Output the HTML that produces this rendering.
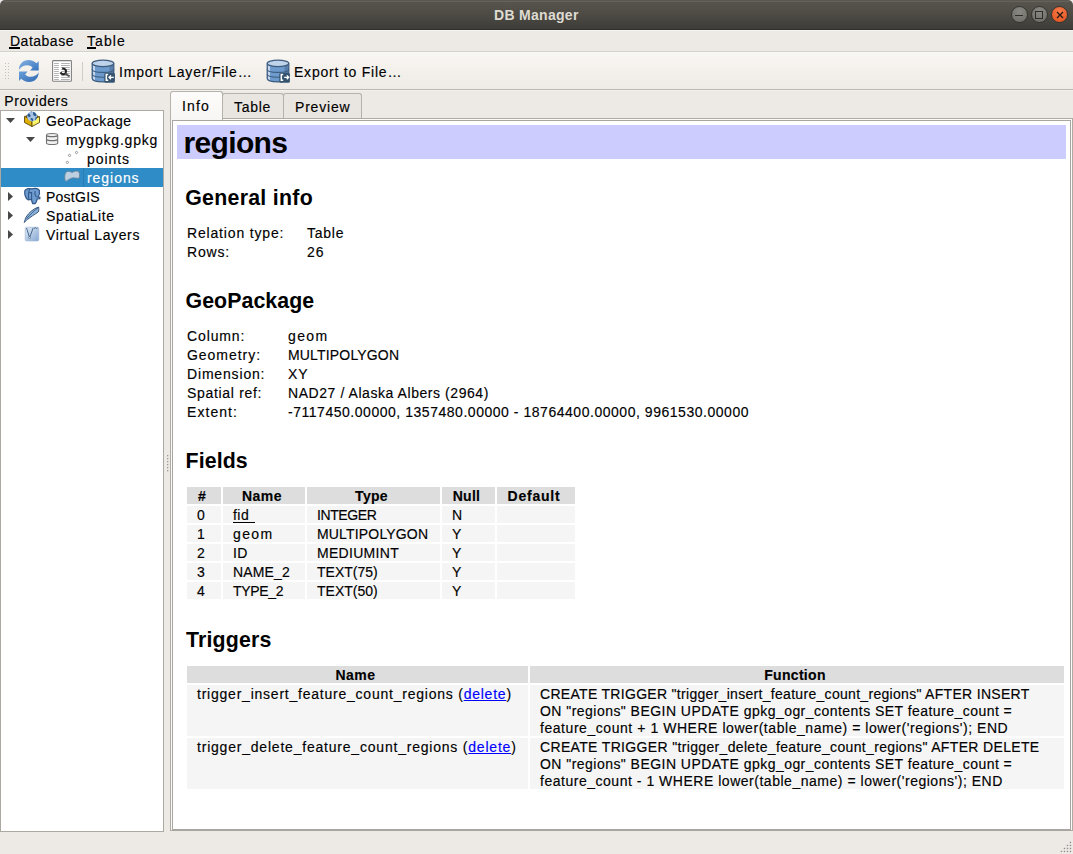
<!DOCTYPE html>
<html><head><meta charset="utf-8">
<style>
html,body{margin:0;padding:0}
body{width:1073px;height:854px;overflow:hidden;position:relative;background:#edeae6;font-family:"Liberation Sans",sans-serif;color:#000}
.a{position:absolute}
.t{position:absolute;font-size:14px;line-height:19px;letter-spacing:.45px;white-space:pre;color:#000;-webkit-text-stroke:.15px currentColor}
.h{position:absolute;font-size:21.33px;line-height:26px;font-weight:bold;white-space:pre;color:#000}
.cell{position:absolute;background:#f5f5f5}
.hc{position:absolute;background:#dddddd}
.b{font-weight:bold}
</style></head>
<body>
<!-- desktop corners -->
<div class="a" style="left:0;top:0;width:1073px;height:8px;background:#ebebeb"></div>
<!-- title bar -->
<div class="a" style="left:0;top:0;width:1073px;height:29px;border-radius:5px 5px 0 0;background:linear-gradient(#5c5851 0px,#57544d 2px,#4f4c46 13px,#44423d 23px,#3f3d39 29px);border-bottom:1px solid #302e2a"></div>
<div class="a" style="left:4px;top:1px;width:1065px;height:1px;background:#66635a"></div>
<div class="a b" style="left:494px;top:6px;font-size:14px;line-height:19px;color:#dfdbd2;letter-spacing:.3px;white-space:pre">DB Manager</div>
<!-- window buttons -->
<div class="a" style="left:1011px;top:6px;width:15px;height:15px;border-radius:50%;background:radial-gradient(circle at 50% 30%,#8a8883,#6c6a65);border:1px solid #36342f"></div>
<div class="a" style="left:1015px;top:15px;width:8px;height:1px;background:#2f2d29"></div>
<div class="a" style="left:1031px;top:6px;width:15px;height:15px;border-radius:50%;background:radial-gradient(circle at 50% 30%,#8a8883,#6c6a65);border:1px solid #36342f"></div>
<div class="a" style="left:1035px;top:11px;width:6px;height:6px;border:1px solid #2f2d29"></div>
<div class="a" style="left:1051px;top:6px;width:15px;height:15px;border-radius:50%;background:radial-gradient(circle at 50% 30%,#f77a4a,#e0501c);border:1px solid #36342f"></div>
<svg class="a" style="left:1052px;top:7px" width="16" height="16"><path d="M5 5L11 11M11 5L5 11" stroke="#2a1a10" stroke-width="1.4"/></svg>

<!-- menubar -->
<div class="a" style="left:0;top:30px;width:1073px;height:1px;background:#f8f6f2"></div>
<div class="a" style="left:0;top:51px;width:1073px;height:1px;background:#d5d1cb"></div>
<div class="t" style="left:10px;top:32px;letter-spacing:0.5px">Database</div>
<div class="a" style="left:9px;top:47px;width:11px;height:2px;background:#000"></div>
<div class="t" style="left:87px;top:32px;letter-spacing:1.1px">Table</div>
<div class="a" style="left:87px;top:47px;width:9px;height:2px;background:#000"></div>

<!-- toolbar -->
<div class="a" style="left:0;top:52px;width:1073px;height:37px;background:linear-gradient(#f9f7f3,#f5f2ee 40%,#eeebe7)"></div><div class="a" style="left:0;top:52px;width:1073px;height:1px;background:#fbf9f6"></div>
<div class="a" style="left:0;top:89px;width:1073px;height:1px;background:#bbb7b1"></div>
<div class="a" style="left:0;top:90px;width:1073px;height:1px;background:#f4f2ee"></div>


<!-- toolbar contents -->
<svg class="a" style="left:4px;top:62px" width="6" height="18"><g fill="#c3bfb9"><rect x="1" y="1" width="1" height="1"/><rect x="4" y="1" width="1" height="1"/><rect x="1" y="4" width="1" height="1"/><rect x="4" y="4" width="1" height="1"/><rect x="1" y="7" width="1" height="1"/><rect x="4" y="7" width="1" height="1"/><rect x="1" y="10" width="1" height="1"/><rect x="4" y="10" width="1" height="1"/><rect x="1" y="13" width="1" height="1"/><rect x="4" y="13" width="1" height="1"/><rect x="1" y="16" width="1" height="1"/><rect x="4" y="16" width="1" height="1"/></g></svg>
<svg class="a" style="left:16px;top:58px" width="26" height="26" viewBox="0 0 26 26">
<defs><linearGradient id="rg" x1="0" y1="0" x2="1" y2="1"><stop offset="0" stop-color="#86b3e2"/><stop offset="1" stop-color="#3572bd"/></linearGradient>
<linearGradient id="rg2" x1="0" y1="0" x2="1" y2="1"><stop offset="0" stop-color="#6a9fd8"/><stop offset="1" stop-color="#2f69b2"/></linearGradient></defs>
<path d="M3,11.8 C3,6 7,2 12.5,2 C16,2 18.5,3.4 20.6,5.2 L22.7,3 L22.7,12.6 L14.2,12.6 L16.6,9.6 C15,8 13.5,7.2 11.5,7.2 C7.5,7.2 4.5,9 3,11.8 Z" fill="url(#rg)"/>
<path d="M22.7,14.2 C22.7,20 18.7,24 13.2,24 C9.7,24 7.2,22.6 5.1,20.8 L3,23 L3,13.4 L11.5,13.4 L9.1,16.4 C10.7,18 12.2,18.8 14.2,18.8 C18.2,18.8 21.2,17 22.7,14.2 Z" fill="url(#rg2)"/>
</svg>
<svg class="a" style="left:50px;top:58px" width="26" height="26" viewBox="0 0 26 26">
<rect x="2.6" y="2.6" width="18.8" height="20.6" rx="0.8" fill="#fff" stroke="#808080" stroke-width="1.1"/>
<path d="M4.1 5.5H8.8M11.1 5.5H19.8M4.1 7.5H8.8M11.1 7.5H19.8M4.1 9.5H8.8M11.1 9.5H19.8M4.1 11.5H8.8M11.1 11.5H19.8M4.1 13.5H8.8M11.1 13.5H19.8M4.1 15.5H8.8M11.1 15.5H19.8M4.1 17.5H8.8M11.1 17.5H19.8M4.1 19.5H8.8M11.1 19.5H19.8M4.1 21.5H8.8M11.1 21.5H19.8" stroke="#a9a9a9" stroke-width="0.9"/>
<path d="M12.2,10.6 C15.3,10.2 17,12.8 15.6,15.2 C14.2,17 11.6,16.4 10.4,14.4" fill="none" stroke="#222" stroke-width="2.1"/>
<path d="M15.2,15.4 L19.6,18.6" stroke="#555" stroke-width="1.8"/>
</svg>
<div class="a" style="left:82px;top:62px;width:1px;height:19px;background:#cfcbc5"></div>
<svg class="a" style="left:91px;top:59px" width="25" height="25" viewBox="0 0 25 25">
<path d="M1.2,4.4 V19.6 C1.2,21.6 6,22.9 12,22.9 C18,22.9 22.8,21.6 22.8,19.6 V4.4 Z" fill="#6e9bcd"/>
<path d="M1.8,5 V19.8 L4,21 V6.5 Z" fill="#c3d6ec"/>
<path d="M18.5,6.8 V21.8 L22.4,20.2 V5.2 Z" fill="#5a7fac"/>
<path d="M1.2,4.4 V19.6 C1.2,21.6 6,22.9 12,22.9 C18,22.9 22.8,21.6 22.8,19.6 V4.4" fill="none" stroke="#3d5b7d" stroke-width="1.2"/>
<path d="M1.2,10.2 C1.2,12.2 6,13.4 12,13.4 C18,13.4 22.8,12.2 22.8,10.2 M1.2,15 C1.2,17 6,18.2 12,18.2 C18,18.2 22.8,17 22.8,15" fill="none" stroke="#3d5b7d" stroke-width="1.1"/>
<ellipse cx="12" cy="4.4" rx="10.8" ry="3.2" fill="#bed2e9" stroke="#3d5b7d" stroke-width="1.2"/>
<rect x="13.3" y="13.8" width="10.6" height="10" rx="1.6" fill="#36546f"/>
<path d="M17.2,15.6 H15.3 V21.2 H17.2" fill="none" stroke="#fff" stroke-width="1.5"/>
<path d="M22.8,18.3 H18.2 M20,16.4 L18,18.3 L20,20.2" fill="none" stroke="#fff" stroke-width="1.3"/>
</svg>
<div class="t" style="left:119px;top:63px;letter-spacing:0.8px">Import Layer/File…</div>
<svg class="a" style="left:266px;top:59px" width="25" height="25" viewBox="0 0 25 25">
<path d="M1.2,4.4 V19.6 C1.2,21.6 6,22.9 12,22.9 C18,22.9 22.8,21.6 22.8,19.6 V4.4 Z" fill="#6e9bcd"/>
<path d="M1.8,5 V19.8 L4,21 V6.5 Z" fill="#c3d6ec"/>
<path d="M18.5,6.8 V21.8 L22.4,20.2 V5.2 Z" fill="#5a7fac"/>
<path d="M1.2,4.4 V19.6 C1.2,21.6 6,22.9 12,22.9 C18,22.9 22.8,21.6 22.8,19.6 V4.4" fill="none" stroke="#3d5b7d" stroke-width="1.2"/>
<path d="M1.2,10.2 C1.2,12.2 6,13.4 12,13.4 C18,13.4 22.8,12.2 22.8,10.2 M1.2,15 C1.2,17 6,18.2 12,18.2 C18,18.2 22.8,17 22.8,15" fill="none" stroke="#3d5b7d" stroke-width="1.1"/>
<ellipse cx="12" cy="4.4" rx="10.8" ry="3.2" fill="#bed2e9" stroke="#3d5b7d" stroke-width="1.2"/>
<rect x="13.3" y="13.8" width="10.6" height="10" rx="1.6" fill="#36546f"/>
<path d="M17.2,15.6 H15.3 V21.2 H17.2" fill="none" stroke="#fff" stroke-width="1.5"/>
<path d="M18.2,18.3 H22.6 M20.8,16.4 L22.8,18.3 L20.8,20.2" fill="none" stroke="#fff" stroke-width="1.3"/>
</svg>
<div class="t" style="left:294px;top:63px;letter-spacing:0.78px">Export to File…</div>



<!-- providers label -->
<div class="t" style="left:4.3px;top:92px;letter-spacing:0.55px">Providers</div>

<!-- tree -->
<div class="a" style="left:0;top:110px;width:162px;height:720px;background:#fff;border:1px solid #aca8a2"></div>
<div class="a" style="left:1px;top:168px;width:162px;height:19px;background:#308cc6"></div>
<!-- tree icons -->
<svg class="a" style="left:0;top:111px" width="164" height="133">
<g fill="#474747">
<path d="M6 7H15L10.5 12Z"/>
<path d="M26 26H35L30.5 31Z"/>
<path d="M8 81V90L13 85.5Z"/>
<path d="M8 100V109L13 104.5Z"/>
<path d="M8 119V128L13 123.5Z"/>
</g>
</svg>

<svg class="a" style="left:22px;top:110px" width="20" height="20" viewBox="0 0 20 20">
<path d="M2.5,6.3 L10,2.8 L17.5,6.5 L10,10.5 Z" fill="#6b5a10"/>
<path d="M2.5,6.3 L10,10.5 L10,16.5 L2.5,12.5 Z" fill="#e0b000" stroke="#5c4a0c" stroke-width="0.9"/>
<path d="M10,10.5 L17.5,6.5 L17.5,12.5 L10,16.5 Z" fill="#fbf66e" stroke="#5c4a0c" stroke-width="0.9"/>
<circle cx="10.1" cy="6.4" r="5" fill="#a7c4e6"/>
<path d="M6.2,3.6 C7.8,3.8 9,5 8.5,6.6 C7.6,7.6 6,7 5.3,5.6 Z M11,2 C12.8,2.2 14.6,3.6 14.4,5.8 C13.2,6.6 11.8,6 11.2,4.6 Z M8.6,8 C10.4,7.8 12,9.2 11,10.9 C9.6,11 8.4,9.8 8.6,8 Z M13.6,7.2 L15,6.8 C14.8,9 14,10 13,10.3 Z M8.4,1.6 L10,1.4 L9.4,2.6 Z" fill="#2c5a8c"/>
</svg>
<svg class="a" style="left:42px;top:128px" width="20" height="20" viewBox="0 0 20 20">
<path d="M4.5,7 C4.5,5 15.7,5 15.7,7 V15 C15.7,17 4.5,17 4.5,15 Z" fill="#f0f0f0" stroke="#727272" stroke-width="1.1"/>
<path d="M4.8,7.8 C6,8.9 14.2,8.9 15.4,7.8 M4.8,11.8 C6,12.9 14.2,12.9 15.4,11.8" fill="none" stroke="#6f6f6f" stroke-width="1.2"/>
</svg>
<svg class="a" style="left:60px;top:148px" width="24" height="18" viewBox="0 0 24 18">
<g fill="#fff" stroke="#808080" stroke-width="0.75"><circle cx="16.5" cy="4.5" r="1.1"/><circle cx="9.5" cy="7.4" r="1.1"/><circle cx="7.4" cy="14.4" r="1.1"/></g>
</svg>
<div class="a" style="left:83px;top:168px;width:1px;height:19px;background:#2a7db3"></div>
<svg class="a" style="left:60px;top:166px" width="24" height="20" viewBox="0 0 24 20">
<path d="M5.4,7.4 C6.4,5 9.5,4.8 12,6.6 C14,5.4 17,4.4 18.8,5.8 C19.8,7.4 19.7,10.5 19.1,12.1 C17,12.7 14.5,11.6 12.5,11.9 C10,12.3 8,14 6,15.4 C4.6,14.5 4.3,10 5.4,7.4 Z" fill="#bcd0e2" stroke="#6a8194" stroke-width="0.8"/>
</svg>
<svg class="a" style="left:22px;top:186px" width="20" height="20" viewBox="0 0 20 20">
<path d="M2.8,4.8 C3.8,2.5 8,2.2 10,2.8 C12,2.2 16,2 17.4,4.5 C18,7 17,9.5 16,10.8 L17.8,11.3 L17.8,12.6 L15.2,12.8 C14.8,14.5 14.2,17 13,17.6 L10.8,17.6 C10,16 9.6,14.5 9.5,13.4 L6,13.8 C3.8,12.8 2.3,8.5 2.8,4.8 Z" fill="#6f9cd0" stroke="#33598a" stroke-width="1.25"/>
<path d="M7.6,3.2 C6.4,6 6.2,10 7,13.4 M7,6.6 H9.6 V13 M13.2,5.2 C12.6,7.4 13,9.6 14.6,11" fill="none" stroke="#33598a" stroke-width="1.1"/>
</svg>
<svg class="a" style="left:22px;top:205px" width="20" height="20" viewBox="0 0 20 20">
<path d="M2.3,17.5 C3,15 3.3,13.4 4,12.2 C6.6,8 11,3.8 16.6,2 C17,4 16.9,5.8 16.2,7 C12.5,9.4 8.5,12 5.2,14.6 C3.9,15.6 3,16.6 2.3,17.5 Z" fill="#8db4de" stroke="#2c4b70" stroke-width="0.9"/>
<path d="M4.6,13.6 C8,10 12,5.5 16.2,2.8" fill="none" stroke="#2c4b70" stroke-width="0.8"/>
</svg>
<svg class="a" style="left:22px;top:225px" width="20" height="18" viewBox="0 0 20 18">
<defs><linearGradient id="vg" x1="0" y1="0" x2="1" y2="1"><stop offset="0" stop-color="#e3ebf5"/><stop offset="1" stop-color="#86a8d3"/></linearGradient></defs>
<rect x="3.2" y="2.2" width="13.6" height="13.8" rx="1.5" fill="url(#vg)" stroke="#9db5d6" stroke-width="0.6"/>
<path d="M4.5,3 L7.6,12.6 L11.2,3 M12,3.5 L13.5,2.6 L14.5,3.5 L15.5,2.8" fill="none" stroke="#3b5c84" stroke-width="0.9"/>
<circle cx="7.6" cy="12.6" r="0.9" fill="#fff" stroke="#3b5c84" stroke-width="0.6"/>
</svg>
<div class="t" style="left:46px;top:112px">GeoPackage</div>
<div class="t" style="left:66px;top:131px;letter-spacing:0.81px">mygpkg.gpkg</div>
<div class="t" style="left:87px;top:150px;letter-spacing:0.95px">points</div>
<div class="t" style="left:87px;top:169px;color:#fff;letter-spacing:0.95px">regions</div>
<div class="t" style="left:46px;top:188px;letter-spacing:0.25px">PostGIS</div>
<div class="t" style="left:46px;top:207px;letter-spacing:0.65px">SpatiaLite</div>
<div class="t" style="left:46px;top:226px;letter-spacing:0.62px">Virtual Layers</div>

<svg class="a" style="left:166.8px;top:455px" width="3" height="18"><g fill="#9d9994"><rect x="0" y="0" width="1.3" height="1.3"/><rect x="0" y="3" width="1.3" height="1.3"/><rect x="0" y="6" width="1.3" height="1.3"/><rect x="0" y="9" width="1.3" height="1.3"/><rect x="0" y="12" width="1.3" height="1.3"/><rect x="0" y="15" width="1.3" height="1.3"/></g></svg>
<!-- tabs -->
<div class="a" style="left:222px;top:93px;width:60px;height:25px;background:#e9e6e2;border:1px solid #b5b1ab;border-bottom:none;border-radius:3px 3px 0 0"></div>
<div class="a" style="left:283px;top:93px;width:77px;height:25px;background:#e9e6e2;border:1px solid #b5b1ab;border-bottom:none;border-radius:3px 3px 0 0"></div>
<div class="t" style="left:234px;top:98px;letter-spacing:0.7px">Table</div>
<div class="t" style="left:295px;top:98px;letter-spacing:0.8px">Preview</div>

<!-- pane -->
<div class="a" style="left:170px;top:118px;width:901px;height:711px;border:1px solid #aeaaa4;background:#fbfaf8"></div>
<div class="a" style="left:170px;top:91px;width:51px;height:28px;background:linear-gradient(#fdfcfb,#f7f6f4);border:1px solid #b5b1ab;border-bottom:none;border-radius:3px 3px 0 0"></div>
<div class="t" style="left:182px;top:97px;letter-spacing:1.15px">Info</div>
<div class="a" style="left:172px;top:120px;width:897px;height:708px;border:1px solid #a9a5a0;border-bottom-width:2px;background:#fff"></div>

<!-- content -->
<div class="a" style="left:177px;top:125px;width:889px;height:34px;background:#ccccff"></div>
<div class="a b" style="left:183.5px;top:126px;font-size:30px;line-height:34px;letter-spacing:-.65px;white-space:pre">regions</div>

<div class="h" style="left:185.2px;top:185px;letter-spacing:.28px">General info</div>
<div class="t" style="left:187px;top:224px;letter-spacing:0.83px">Relation type:</div>
<div class="t" style="left:307px;top:224px;letter-spacing:0.75px">Table</div>
<div class="t" style="left:187px;top:243px;letter-spacing:0.8px">Rows:</div>
<div class="t" style="left:307px;top:243px;letter-spacing:1.0px">26</div>

<div class="h" style="left:185.5px;top:288px;letter-spacing:.07px">GeoPackage</div>
<div class="t" style="left:187px;top:327px;letter-spacing:0.88px">Column:</div>
<div class="t" style="left:288px;top:327px;letter-spacing:1.4px">geom</div>
<div class="t" style="left:187px;top:346px;letter-spacing:0.97px">Geometry:</div>
<div class="t" style="left:288px;top:346px;letter-spacing:0.17px">MULTIPOLYGON</div>
<div class="t" style="left:187px;top:365px;letter-spacing:0.83px">Dimension:</div>
<div class="t" style="left:288px;top:365px;letter-spacing:0.9px">XY</div>
<div class="t" style="left:187px;top:384px;letter-spacing:0.68px">Spatial ref:</div>
<div class="t" style="left:288px;top:384px;letter-spacing:0.56px">NAD27 / Alaska Albers (2964)</div>
<div class="t" style="left:187px;top:403px;letter-spacing:1.05px">Extent:</div>
<div class="t" style="left:288px;top:403px;letter-spacing:0.53px">-7117450.00000, 1357480.00000 - 18764400.00000, 9961530.00000</div>

<div class="h" style="left:185.5px;top:448px;letter-spacing:.12px">Fields</div>
<div class="hc" style="left:187px;top:487px;width:34px;height:17px"></div>
<div class="t b" style="left:185px;top:487px;width:34px;text-align:center;letter-spacing:.3px">#</div>
<div class="hc" style="left:223px;top:487px;width:82px;height:17px"></div>
<div class="t b" style="left:221px;top:487px;width:82px;text-align:center;letter-spacing:.48px">Name</div>
<div class="hc" style="left:307px;top:487px;width:133px;height:17px"></div>
<div class="t b" style="left:305px;top:487px;width:133px;text-align:center;letter-spacing:.3px">Type</div>
<div class="hc" style="left:442px;top:487px;width:53px;height:17px"></div>
<div class="t b" style="left:440px;top:487px;width:53px;text-align:center;letter-spacing:.3px">Null</div>
<div class="hc" style="left:497px;top:487px;width:78px;height:17px"></div>
<div class="t b" style="left:495px;top:487px;width:78px;text-align:center;letter-spacing:.8px">Default</div>
<div class="cell" style="left:187px;top:506px;width:34px;height:17px"></div>
<div class="t" style="left:197px;top:506px">0</div>
<div class="cell" style="left:223px;top:506px;width:82px;height:17px"></div>
<div class="t" style="left:233px;top:506px">fid</div>
<div class="cell" style="left:307px;top:506px;width:133px;height:17px"></div>
<div class="t" style="left:317px;top:506px;letter-spacing:-0.4px">INTEGER</div>
<div class="cell" style="left:442px;top:506px;width:53px;height:17px"></div>
<div class="t" style="left:452px;top:506px">N</div>
<div class="cell" style="left:497px;top:506px;width:78px;height:17px"></div>
<div class="cell" style="left:187px;top:525px;width:34px;height:17px"></div>
<div class="t" style="left:197px;top:525px">1</div>
<div class="cell" style="left:223px;top:525px;width:82px;height:17px"></div>
<div class="t" style="left:233px;top:525px;letter-spacing:1.4px">geom</div>
<div class="cell" style="left:307px;top:525px;width:133px;height:17px"></div>
<div class="t" style="left:317px;top:525px;letter-spacing:0.17px">MULTIPOLYGON</div>
<div class="cell" style="left:442px;top:525px;width:53px;height:17px"></div>
<div class="t" style="left:452px;top:525px">Y</div>
<div class="cell" style="left:497px;top:525px;width:78px;height:17px"></div>
<div class="cell" style="left:187px;top:544px;width:34px;height:17px"></div>
<div class="t" style="left:197px;top:544px">2</div>
<div class="cell" style="left:223px;top:544px;width:82px;height:17px"></div>
<div class="t" style="left:233px;top:544px">ID</div>
<div class="cell" style="left:307px;top:544px;width:133px;height:17px"></div>
<div class="t" style="left:317px;top:544px;letter-spacing:0.3px">MEDIUMINT</div>
<div class="cell" style="left:442px;top:544px;width:53px;height:17px"></div>
<div class="t" style="left:452px;top:544px">Y</div>
<div class="cell" style="left:497px;top:544px;width:78px;height:17px"></div>
<div class="cell" style="left:187px;top:563px;width:34px;height:17px"></div>
<div class="t" style="left:197px;top:563px">3</div>
<div class="cell" style="left:223px;top:563px;width:82px;height:17px"></div>
<div class="t" style="left:233px;top:563px;letter-spacing:0.15px">NAME_2</div>
<div class="cell" style="left:307px;top:563px;width:133px;height:17px"></div>
<div class="t" style="left:317px;top:563px;letter-spacing:0px">TEXT(75)</div>
<div class="cell" style="left:442px;top:563px;width:53px;height:17px"></div>
<div class="t" style="left:452px;top:563px">Y</div>
<div class="cell" style="left:497px;top:563px;width:78px;height:17px"></div>
<div class="cell" style="left:187px;top:582px;width:34px;height:17px"></div>
<div class="t" style="left:197px;top:582px">4</div>
<div class="cell" style="left:223px;top:582px;width:82px;height:17px"></div>
<div class="t" style="left:233px;top:582px;letter-spacing:-0.3px">TYPE_2</div>
<div class="cell" style="left:307px;top:582px;width:133px;height:17px"></div>
<div class="t" style="left:317px;top:582px;letter-spacing:0px">TEXT(50)</div>
<div class="cell" style="left:442px;top:582px;width:53px;height:17px"></div>
<div class="t" style="left:452px;top:582px">Y</div>
<div class="cell" style="left:497px;top:582px;width:78px;height:17px"></div>
<div class="a" style="left:233px;top:522px;width:22px;height:1px;background:#000"></div>
<div class="h" style="left:186px;top:627px;letter-spacing:.17px">Triggers</div>
<div class="hc" style="left:187px;top:666px;width:341px;height:17px"></div>
<div class="hc" style="left:530px;top:666px;width:534px;height:17px"></div>
<div class="t b" style="left:185px;top:666px;width:341px;text-align:center;letter-spacing:.48px">Name</div>
<div class="t b" style="left:528px;top:666px;width:534px;text-align:center;letter-spacing:.3px">Function</div>
<div class="cell" style="left:187px;top:685px;width:341px;height:51px"></div>
<div class="cell" style="left:530px;top:685px;width:534px;height:51px"></div>
<div class="t" style="left:197px;top:685px;letter-spacing:0.77px">trigger_insert_feature_count_regions (<span style="color:#0000ff;text-decoration:underline">delete</span>)</div>
<div class="t" style="left:540px;top:686px;line-height:17px;letter-spacing:.3px">CREATE TRIGGER "trigger_insert_feature_count_regions" AFTER INSERT</div>
<div class="t" style="left:540px;top:703px;line-height:17px;letter-spacing:0.46px">ON "regions" BEGIN UPDATE gpkg_ogr_contents SET feature_count =</div>
<div class="t" style="left:540px;top:720px;line-height:17px;letter-spacing:0.55px">feature_count + 1 WHERE lower(table_name) = lower('regions'); END</div>
<div class="cell" style="left:187px;top:738px;width:341px;height:51px"></div>
<div class="cell" style="left:530px;top:738px;width:534px;height:51px"></div>
<div class="t" style="left:197px;top:738px;letter-spacing:0.79px">trigger_delete_feature_count_regions (<span style="color:#0000ff;text-decoration:underline">delete</span>)</div>
<div class="t" style="left:540px;top:739px;line-height:17px;letter-spacing:0.34px">CREATE TRIGGER "trigger_delete_feature_count_regions" AFTER DELETE</div>
<div class="t" style="left:540px;top:756px;line-height:17px;letter-spacing:0.46px">ON "regions" BEGIN UPDATE gpkg_ogr_contents SET feature_count =</div>
<div class="t" style="left:540px;top:773px;line-height:17px;letter-spacing:.52px">feature_count - 1 WHERE lower(table_name) = lower('regions'); END</div>
<svg class="a" style="left:1058px;top:839px" width="15" height="15"><g fill="#ffffff" opacity=".7"><rect x="12.6" y="3.6" width="1.2" height="1.2"/><rect x="9.6" y="6.6" width="1.2" height="1.2"/><rect x="12.6" y="6.6" width="1.2" height="1.2"/><rect x="6.6" y="9.6" width="1.2" height="1.2"/><rect x="9.6" y="9.6" width="1.2" height="1.2"/><rect x="12.6" y="9.6" width="1.2" height="1.2"/><rect x="3.6" y="12.6" width="1.2" height="1.2"/><rect x="6.6" y="12.6" width="1.2" height="1.2"/><rect x="9.6" y="12.6" width="1.2" height="1.2"/><rect x="12.6" y="12.6" width="1.2" height="1.2"/></g><g fill="#8f8b86"><rect x="11.8" y="2.8" width="1.4" height="1.4"/><rect x="8.8" y="5.8" width="1.4" height="1.4"/><rect x="11.8" y="5.8" width="1.4" height="1.4"/><rect x="5.8" y="8.8" width="1.4" height="1.4"/><rect x="8.8" y="8.8" width="1.4" height="1.4"/><rect x="11.8" y="8.8" width="1.4" height="1.4"/><rect x="2.8" y="11.8" width="1.4" height="1.4"/><rect x="5.8" y="11.8" width="1.4" height="1.4"/><rect x="8.8" y="11.8" width="1.4" height="1.4"/><rect x="11.8" y="11.8" width="1.4" height="1.4"/></g></svg>
</body></html>
